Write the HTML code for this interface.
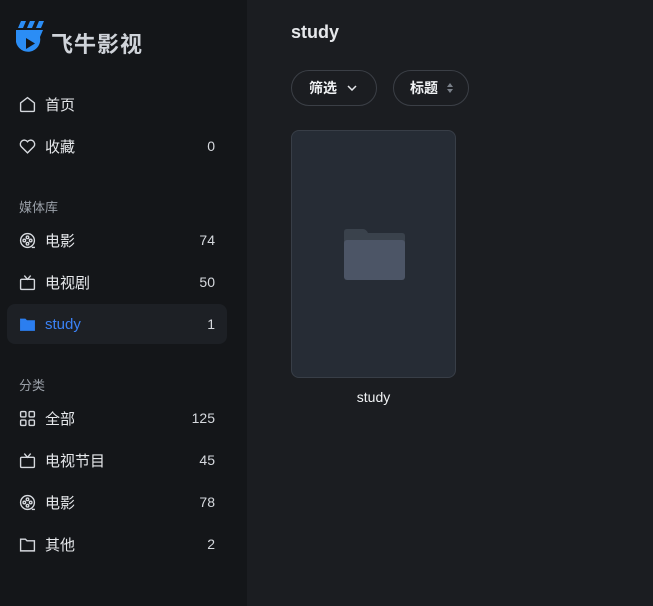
<!DOCTYPE html>
<html><head><meta charset="utf-8"><style>
*{margin:0;padding:0;box-sizing:border-box}
body{width:653px;height:606px;background:#1b1d21;font-family:"Liberation Sans","Noto Sans CJK SC",sans-serif;position:relative;overflow:hidden;color:#e6e8eb}
.sb{position:absolute;left:0;top:0;width:247px;height:606px;background:#141619}
.logo{position:absolute;left:14px;top:20px}
.brand{position:absolute;left:51px;top:27px;font-size:22px;font-weight:bold;color:#cfd3d9;letter-spacing:1px}
.it{position:absolute;left:7px;width:220px;height:40px;display:flex;align-items:center;font-size:15px;color:#e6e8eb}
.it svg{position:absolute;left:12px}
.it .t{position:absolute;left:38px}
.it .n{position:absolute;right:12px;font-size:14px;color:#d6d9de}
.act{background:#1d2025;border-radius:8px}
.act .t{color:#3b82f6}
.sec{position:absolute;left:19px;font-size:13px;color:#9aa0a8}
.h{position:absolute;left:291px;top:22px;font-size:18px;font-weight:bold;color:#e6e8eb}
.btn{position:absolute;top:70px;height:36px;border:1px solid #3b3f46;border-radius:18px;font-size:14px;font-weight:bold;display:flex;align-items:center;color:#f0f2f4}
.card{position:absolute;left:291px;top:130px;width:165px;height:248px;background:#262c35;border:1px solid #383e47;border-radius:8px}
.cap{position:absolute;left:291px;width:165px;top:389px;text-align:center;font-size:14px;color:#f0f2f4}
</style></head><body>
<div class="sb">
<svg class="logo" width="32" height="36" viewBox="0 0 32 36"><path d="M4 8 L7 1 H12 L9 8Z M13 8 L16 1 H21 L18 8Z M22 8 L25 1 H30 L27 8Z" fill="#2b8df5"/><path d="M2 10 H29 L26 17 A12 12 0 1 1 2 22Z" fill="#2b8df5"/><path d="M12 18 L21 23.5 L12 29Z" fill="#141619"/></svg>
<div class="brand">飞牛影视</div>
<div class="it" style="top:84px"><svg width="17" height="17" viewBox="0 0 16 16" fill="none" stroke="#d6d9de" stroke-width="1.3"><path d="M1.5 6.5 L8 1.5 L14.5 6.5 V13.5 Q14.5 14.5 13.5 14.5 H2.5 Q1.5 14.5 1.5 13.5Z"/></svg><span class="t">首页</span></div>
<div class="it" style="top:126px"><svg width="17" height="17" viewBox="0 0 16 16" fill="none" stroke="#d6d9de" stroke-width="1.3"><path d="M8 14 L2 8 A3.3 3.3 0 0 1 8 3.5 A3.3 3.3 0 0 1 14 8Z"/></svg><span class="t">收藏</span><span class="n">0</span></div>
<div class="sec" style="top:197px">媒体库</div>
<div class="it" style="top:220px"><svg width="17" height="17" viewBox="0 0 16 16" fill="none" stroke="#d6d9de" stroke-width="1.3"><circle cx="8" cy="8" r="6.5"/><circle cx="8" cy="5" r="1.2"/><circle cx="5" cy="8" r="1.2"/><circle cx="11" cy="8" r="1.2"/><circle cx="8" cy="11" r="1.2"/><path d="M12 14.5 H15"/></svg><span class="t">电影</span><span class="n">74</span></div>
<div class="it" style="top:262px"><svg width="17" height="17" viewBox="0 0 16 16" fill="none" stroke="#d6d9de" stroke-width="1.3"><rect x="1.5" y="5" width="13" height="9.5" rx="1"/><path d="M5 1.5 L8 5 L11 1.5"/></svg><span class="t">电视剧</span><span class="n">50</span></div>
<div class="it act" style="top:304px"><svg width="17" height="17" viewBox="0 0 16 16"><path d="M1 2.5 H6 L7.5 4 H15 V14 H1Z" fill="#2b7ef0"/></svg><span class="t">study</span><span class="n">1</span></div>
<div class="sec" style="top:375px">分类</div>
<div class="it" style="top:398px"><svg width="17" height="17" viewBox="0 0 16 16" fill="none" stroke="#d6d9de" stroke-width="1.3"><rect x="1.5" y="1.5" width="5" height="5" rx="1"/><rect x="9.5" y="1.5" width="5" height="5" rx="1"/><rect x="1.5" y="9.5" width="5" height="5" rx="1"/><rect x="9.5" y="9.5" width="5" height="5" rx="1"/></svg><span class="t">全部</span><span class="n">125</span></div>
<div class="it" style="top:440px"><svg width="17" height="17" viewBox="0 0 16 16" fill="none" stroke="#d6d9de" stroke-width="1.3"><rect x="1.5" y="5" width="13" height="9.5" rx="1"/><path d="M5 1.5 L8 5 L11 1.5"/></svg><span class="t">电视节目</span><span class="n">45</span></div>
<div class="it" style="top:482px"><svg width="17" height="17" viewBox="0 0 16 16" fill="none" stroke="#d6d9de" stroke-width="1.3"><circle cx="8" cy="8" r="6.5"/><circle cx="8" cy="5" r="1.2"/><circle cx="5" cy="8" r="1.2"/><circle cx="11" cy="8" r="1.2"/><circle cx="8" cy="11" r="1.2"/><path d="M12 14.5 H15"/></svg><span class="t">电影</span><span class="n">78</span></div>
<div class="it" style="top:524px"><svg width="17" height="17" viewBox="0 0 16 16" fill="none" stroke="#d6d9de" stroke-width="1.3"><path d="M1.5 3 H6 L7.5 4.5 H14.5 V14 H1.5Z"/></svg><span class="t">其他</span><span class="n">2</span></div>
</div>
<div class="h">study</div>
<div class="btn" style="left:291px;width:86px;padding-left:17px">筛选<svg style="margin-left:10px" width="10" height="6" viewBox="0 0 10 6" fill="none" stroke="#e6e8eb" stroke-width="1.5"><path d="M1 1 L5 5 L9 1"/></svg></div>
<div class="btn" style="left:393px;width:76px;padding-left:16px">标题<svg style="margin-left:8px" width="8" height="12" viewBox="0 0 8 12" fill="#7a8089"><path d="M4 1 L7 5 H1Z M4 11 L1 7 H7Z"/></svg></div>
<div class="card"><svg style="position:absolute;left:52px;top:98px" width="61" height="51" viewBox="0 0 61 51"><path d="M3 0 H19 Q22 0 24 4 H58 Q61 4 61 7 V14 H0 V3 Q0 0 3 0Z" fill="#3a424c"/><rect x="0" y="11" width="61" height="40" rx="3" fill="#4c5566"/></svg></div>
<div class="cap">study</div>
</body></html>
